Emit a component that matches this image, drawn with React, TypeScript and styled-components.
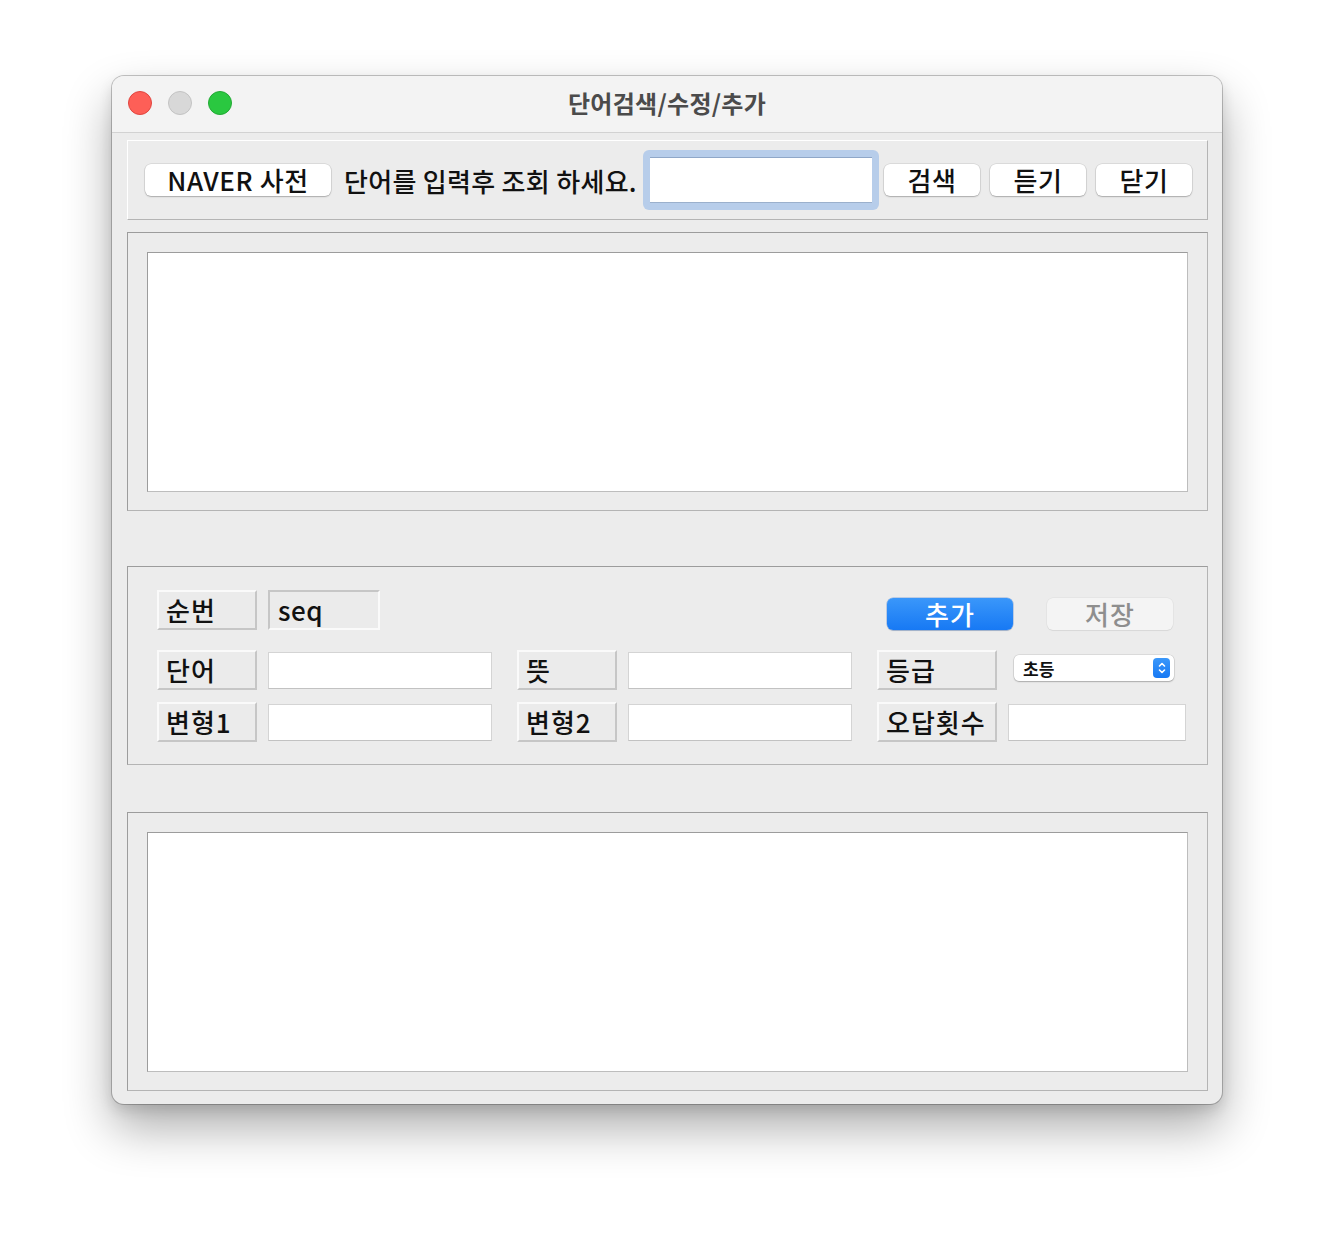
import styled, { createGlobalStyle } from "styled-components";

const GlobalStyle = createGlobalStyle`
    html, body {
        margin: 0;
        padding: 0;
        background: #ffffff;
    }
    body {
        font-family: "Noto Sans CJK KR", "Noto Sans", sans-serif;
        color: #111;
    }
`;

const Page = styled.div`
    width: 1334px;
    height: 1252px;
    padding: 76px 112px 0;
    box-sizing: border-box;
`;

const Window = styled.div`
    width: 1110px;
    height: 1028px;
    border-radius: 12px;
    overflow: hidden;
    background: #ececec;
    box-shadow: 0 0 0 1px rgba(0, 0, 0, 0.22), 0 24px 48px rgba(0, 0, 0, 0.32), 0 6px 14px rgba(0, 0, 0, 0.12);
    display: flex;
    flex-direction: column;
`;

const TitleBar = styled.div`
    height: 56px;
    flex: none;
    background: #f3f3f3;
    border-bottom: 1px solid #d2d2d2;
    position: relative;
    display: flex;
    align-items: center;
    justify-content: center;
`;

const Lights = styled.div`
    position: absolute;
    left: 16px;
    top: 15px;
    display: flex;
    gap: 16px;
`;

const Light = styled.span<{ $color: string; $edge: string }>`
    width: 24px;
    height: 24px;
    border-radius: 50%;
    box-sizing: border-box;
    background: ${(p) => p.$color};
    border: 1px solid ${(p) => p.$edge};
`;

const Title = styled.div`
    font-size: 24px;
    font-weight: 700;
    color: #4b4b4b;
    margin-top: -4px;
    letter-spacing: 0.3px;
`;

const Body = styled.div`
    padding: 7px 14px 0 15px;
    display: flex;
    flex-direction: column;
`;

const Panel = styled.div<{ $top: number; $sunken?: boolean }>`
    margin-top: ${(p) => p.$top}px;
    border: 1px solid;
    border-color: ${(p) =>
        p.$sunken ? "#9c9c9c #b4b4b4 #b4b4b4 #9c9c9c" : "#ffffff #b4b4b4 #b4b4b4 #ffffff"};
    box-sizing: border-box;
`;

const SearchBar = styled(Panel)`
    height: 80px;
    display: flex;
    align-items: center;
    padding-left: 17px;
`;

const MacButton = styled.button<{ $w: number }>`
    width: ${(p) => p.$w}px;
    height: 32px;
    border: none;
    border-radius: 6px;
    background: #ffffff;
    box-shadow: 0 0 0 0.5px rgba(0, 0, 0, 0.14), 0 1px 1.5px rgba(0, 0, 0, 0.22);
    font-family: inherit;
    font-size: 26px;
    font-weight: 500;
    letter-spacing: 0.6px;
    line-height: 32px;
    padding: 0;
    color: #111;
`;

const Prompt = styled.span`
    font-size: 26px;
    font-weight: 500;
    letter-spacing: 0.3px;
    margin-left: 13px;
    white-space: nowrap;
`;

const FocusRing = styled.div`
    margin-left: 6px;
    width: 236px;
    height: 60px;
    box-sizing: border-box;
    border-radius: 6px;
    background: #b7cdea;
    padding: 7px;
    margin-right: 5px;
`;

const FocusField = styled.div`
    height: 100%;
    background: #fff;
    box-shadow: inset 0 1px 0 #8fa7c8, inset 0 -1px 0 #9bb0cc;
`;

const ButtonRow = styled.div`
    display: flex;
    gap: 10px;
`;

const TextPanel = styled(Panel)`
    height: 279px;
    padding: 19px 19px 18px 19px;
`;

const TextArea = styled.div`
    height: 100%;
    background: #fff;
    border: 1px solid;
    border-color: #9c9c9c #bdbdbd #bdbdbd #9c9c9c;
    box-sizing: border-box;
`;

const FormPanel = styled(Panel)`
    height: 199px;
    padding: 23px 0 0 29px;
    display: flex;
    flex-direction: column;
`;

const FormRow = styled.div<{ $gap: number }>`
    display: grid;
    grid-template-columns: 335px 335px 308px;
    column-gap: 25px;
    height: 40px;
    margin-bottom: ${(p) => p.$gap}px;
`;

const Pair = styled.div`
    display: flex;
    align-items: center;
    gap: 11px;
`;

const Label = styled.div<{ $w?: number }>`
    width: ${(p) => p.$w ?? 100}px;
    height: 40px;
    flex: none;
    box-sizing: border-box;
    border: 2px solid;
    border-color: #fafafa #c6c6c6 #c6c6c6 #fafafa;
    background: #ebebeb;
    font-size: 26px;
    font-weight: 500;
    letter-spacing: 1px;
    line-height: 35px;
    padding-left: 7px;
    white-space: nowrap;
`;

const SeqBox = styled(Label)`
    border-color: #c6c6c6 #fafafa #fafafa #c6c6c6;
    padding-left: 8px;
    letter-spacing: 0.5px;
`;

const Field = styled.div<{ $w: number }>`
    width: ${(p) => p.$w}px;
    height: 37px;
    flex: none;
    background: #fff;
    border: 1px solid;
    border-color: #d4d4d4 #d4d4d4 #c2c2c2 #d4d4d4;
    box-sizing: border-box;
`;

const ActionButton = styled.button<{ $primary?: boolean; $left: number }>`
    margin-left: ${(p) => p.$left}px;
    width: 126px;
    height: 32px;
    align-self: flex-end;
    border: none;
    border-radius: 6px;
    padding: 0;
    font-family: inherit;
    font-size: 26px;
    font-weight: 500;
    letter-spacing: 1px;
    line-height: 32px;
    color: ${(p) => (p.$primary ? "#fff" : "#8e8e8e")};
    background: ${(p) => (p.$primary ? "linear-gradient(#3a97fa, #1779f4)" : "#f4f4f4")};
    box-shadow: ${(p) =>
        p.$primary
            ? "0 0 0 0.5px rgba(0,80,200,0.4), 0 1px 1px rgba(0,0,0,0.15)"
            : "0 0 0 0.5px rgba(0,0,0,0.06), 0 1px 1px rgba(0,0,0,0.06)"};
`;

const Select = styled.div`
    margin-left: 6px;
    margin-top: -4px;
    width: 160px;
    height: 26px;
    box-sizing: border-box;
    background: #fff;
    border-radius: 5px;
    box-shadow: 0 0 0 0.5px rgba(0, 0, 0, 0.14), 0 1px 1.5px rgba(0, 0, 0, 0.22);
    display: flex;
    align-items: center;
    justify-content: space-between;
    padding: 0 4px 0 9px;
    font-size: 17px;
    font-weight: 700;
`;

const Stepper = styled.span`
    width: 17px;
    height: 20px;
    border-radius: 4px;
    background: linear-gradient(#3a97fa, #1779f4);
    display: flex;
    align-items: center;
    justify-content: center;
`;

const SelectArrows = () => (
    <Stepper>
        <svg width="10" height="14" viewBox="0 0 10 14" fill="none" stroke="#fff" strokeWidth="1.6" strokeLinecap="round" strokeLinejoin="round">
            <path d="M2.5 5 L5 2.5 L7.5 5" />
            <path d="M2.5 9 L5 11.5 L7.5 9" />
        </svg>
    </Stepper>
);

export default function App() {
    return (
        <Page>
            <GlobalStyle />
            <Window>
                <TitleBar>
                    <Lights>
                        <Light $color="#fe5f57" $edge="#e1453f" />
                        <Light $color="#d8d8d8" $edge="#c3c3c3" />
                        <Light $color="#2ac840" $edge="#22a934" />
                    </Lights>
                    <Title>단어검색/수정/추가</Title>
                </TitleBar>
                <Body>
                    <SearchBar $top={0}>
                        <MacButton $w={186}>NAVER 사전</MacButton>
                        <Prompt>단어를 입력후 조회 하세요.</Prompt>
                        <FocusRing>
                            <FocusField />
                        </FocusRing>
                        <ButtonRow>
                            <MacButton $w={96}>검색</MacButton>
                            <MacButton $w={96}>듣기</MacButton>
                            <MacButton $w={96}>닫기</MacButton>
                        </ButtonRow>
                    </SearchBar>

                    <TextPanel $top={12} $sunken>
                        <TextArea />
                    </TextPanel>

                    <FormPanel $top={55} $sunken>
                        <FormRow $gap={20}>
                            <Pair>
                                <Label>순번</Label>
                                <SeqBox $w={112}>seq</SeqBox>
                            </Pair>
                            <div />
                            <Pair>
                                <ActionButton $primary $left={10}>추가</ActionButton>
                                <ActionButton $left={23}>저장</ActionButton>
                            </Pair>
                        </FormRow>
                        <FormRow $gap={12}>
                            <Pair>
                                <Label>단어</Label>
                                <Field $w={224} />
                            </Pair>
                            <Pair>
                                <Label>뜻</Label>
                                <Field $w={224} />
                            </Pair>
                            <Pair>
                                <Label $w={120}>등급</Label>
                                <Select>
                                    초등
                                    <SelectArrows />
                                </Select>
                            </Pair>
                        </FormRow>
                        <FormRow $gap={0}>
                            <Pair>
                                <Label>변형1</Label>
                                <Field $w={224} />
                            </Pair>
                            <Pair>
                                <Label>변형2</Label>
                                <Field $w={224} />
                            </Pair>
                            <Pair>
                                <Label $w={120}>오답횟수</Label>
                                <Field $w={178} />
                            </Pair>
                        </FormRow>
                    </FormPanel>

                    <TextPanel $top={47} $sunken>
                        <TextArea />
                    </TextPanel>
                </Body>
            </Window>
        </Page>
    );
}
